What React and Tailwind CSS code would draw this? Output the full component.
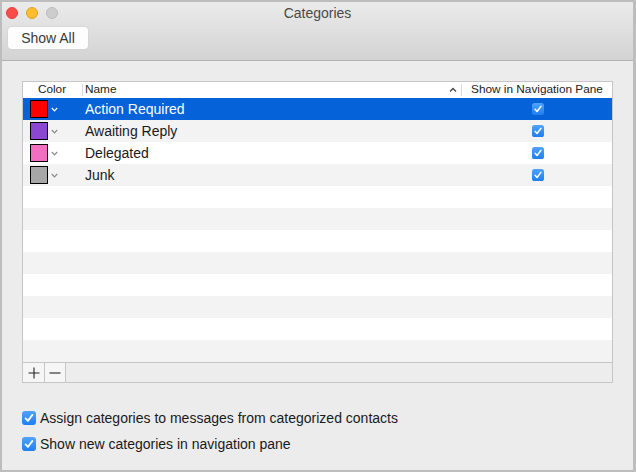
import React from "react";

const rows = [
  { name: "Action Required", color: "#ff0000" },
  { name: "Awaiting Reply", color: "#8b46d4" },
  { name: "Delegated", color: "#f36dc2" },
  { name: "Junk", color: "#a6a6a6" },
];

function Check({ size = 12 }) {
  return (
    <svg width={size} height={size} viewBox="0 0 14 14">
      <defs>
        <linearGradient id="cbg" x1="0" y1="0" x2="0" y2="1">
          <stop offset="0" stopColor="#4fa3fb" />
          <stop offset="1" stopColor="#1f7ef0" />
        </linearGradient>
      </defs>
      <rect x="0" y="0" width="14" height="14" rx="3" fill="url(#cbg)" />
      <path d="M3.6 7.4 L5.9 9.9 L10.4 3.9" fill="none" stroke="#fff" strokeWidth="1.8" strokeLinecap="round" strokeLinejoin="round" />
    </svg>
  );
}

function Chevron({ white }) {
  return (
    <svg width="7" height="5" viewBox="0 0 7 5">
      <path d="M0.8 1 L3.5 3.8 L6.2 1" fill="none" stroke={white ? "#fff" : "#8a8a8a"} strokeWidth="1.2" />
    </svg>
  );
}

export default function App() {
  const allRows = Array.from({ length: 12 }, (_, i) => rows[i] || null);
  return (
    <div
      className="w-[636px] h-[472px] box-border border-l-2 border-t-2 border-r-[3px] border-b-2 border-[#bdbdbd] bg-[#ececec] flex flex-col overflow-hidden"
      style={{ fontFamily: '"Liberation Sans", Arial, sans-serif' }}
    >
      {/* Title + toolbar */}
      <div className="h-[59px] shrink-0 box-border border-b border-[#b3b3b3] bg-gradient-to-b from-[#ebebeb] to-[#d3d3d3] flex flex-col">
        <div className="relative h-[22px] flex items-center justify-center">
          <div className="absolute left-[4px] top-[5px] flex gap-[8px]">
            <div className="w-[12px] h-[12px] rounded-full bg-[#fc4c4a] border border-[#e0403d]" />
            <div className="w-[12px] h-[12px] rounded-full bg-[#fdbd2d] border border-[#dfa12a]" />
            <div className="w-[12px] h-[12px] rounded-full bg-[#cdcdcd] border border-[#bcbcbc]" />
          </div>
          <span className="text-[14px] text-[#4a4a4a]">Categories</span>
        </div>
        <div className="pl-[6px] pt-[3px]">
          <div className="w-[80px] h-[22px] bg-[#fdfdfd] rounded-[4px] flex items-center justify-center text-[14px] text-[#3a3a3a] shadow-[0_0_0_0.5px_#d0d0d0]">
            Show All
          </div>
        </div>
      </div>

      {/* Content */}
      <div className="px-5 pt-5 flex flex-col">
        <div className="border border-[#c6c6c6] bg-white flex flex-col">
          {/* Header */}
          <div className="h-[16px] flex items-center text-[11.8px] text-[#222] bg-white">
            <div className="w-[59px] flex justify-center pr-[1px]">Color</div>
            <div className="w-px h-[12px] bg-[#d8d8d8]" />
            <div className="flex-1 flex items-center pl-[2px] pr-[4px]">
              <span>Name</span>
              <span className="ml-auto">
                <svg width="8" height="6" viewBox="0 0 8 6">
                  <path d="M1 4.5 L4 1.5 L7 4.5" fill="none" stroke="#444" strokeWidth="1.3" />
                </svg>
              </span>
            </div>
            <div className="w-px h-[12px] bg-[#d8d8d8]" />
            <div className="w-[150px] flex justify-center">Show in Navigation Pane</div>
          </div>
          {/* Rows */}
          {allRows.map((r, i) => {
            const selected = i === 0;
            const bg = selected ? "bg-[#0562d9]" : i % 2 === 1 ? "bg-[#f3f3f3]" : "bg-white";
            return (
              <div key={i} className={`h-[22px] flex items-center ${bg}`}>
                {r && (
                  <>
                    <div className="w-[59px] flex items-center pl-[7px] gap-[3px]">
                      <div
                        className="w-[18px] h-[18px] box-border border border-black"
                        style={{ background: r.color }}
                      />
                      <Chevron white={selected} />
                    </div>
                    <div className={`flex-1 pl-[3px] text-[14px] ${selected ? "text-white" : "text-[#1a1a1a]"}`}>
                      {r.name}
                    </div>
                    <div className="w-[150px] flex justify-center pl-[1px]">
                      <Check size={12} />
                    </div>
                  </>
                )}
              </div>
            );
          })}
          {/* Bottom bar */}
          <div className="h-[20px] box-border border-t border-[#c6c6c6] bg-[#ededed] flex">
            <div className="w-[22px] border-r border-[#c6c6c6] bg-[#f6f6f6] flex items-center justify-center">
              <svg width="12" height="12" viewBox="0 0 12 12">
                <path d="M6 0.5 V11.5 M0.5 6 H11.5" stroke="#222" strokeWidth="1.1" />
              </svg>
            </div>
            <div className="w-[21px] border-r border-[#c6c6c6] bg-[#f6f6f6] flex items-center justify-center">
              <svg width="12" height="12" viewBox="0 0 12 12">
                <path d="M0.5 6 H11.5" stroke="#222" strokeWidth="1.1" />
              </svg>
            </div>
          </div>
        </div>

        {/* Options */}
        <div className="mt-[28px] flex flex-col gap-[12px] text-[14px] text-[#1a1a1a]">
          <div className="flex items-center gap-[4px] h-[14px]">
            <Check size={14} />
            <span>Assign categories to messages from categorized contacts</span>
          </div>
          <div className="flex items-center gap-[4px] h-[14px]">
            <Check size={14} />
            <span>Show new categories in navigation pane</span>
          </div>
        </div>
      </div>
    </div>
  );
}
